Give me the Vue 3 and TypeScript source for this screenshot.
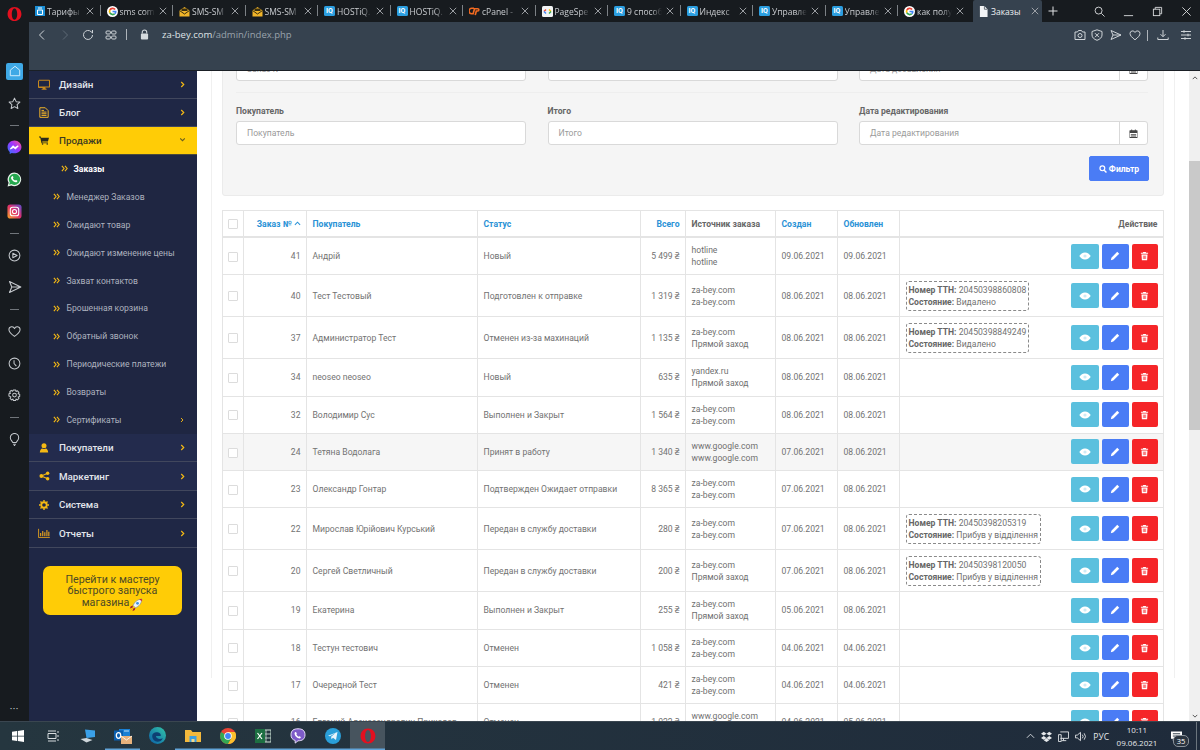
<script setup lang="ts">
interface Tab {
  icon: string;
  title: string;
}

interface MenuItem {
  name: string;
  icon: string;
  light?: boolean;
  open?: boolean;
}

interface Order {
  id: number;
  buyer: string;
  status: string;
  total: string;
  source: string[];
  created: string;
  updated: string;
  ttn?: string;
  state?: string;
  hover?: boolean;
}

const tabs: Tab[] = [
  { icon: 'a', title: 'Тарифы' },
  { icon: 'g', title: 'sms com' },
  { icon: 'sms', title: 'SMS-SM' },
  { icon: 'sms', title: 'SMS-SM' },
  { icon: 'iq', title: 'HOSTiQ.' },
  { icon: 'iq', title: 'HOSTiQ.' },
  { icon: 'cp', title: 'cPanel -' },
  { icon: 'ps', title: 'PageSpe' },
  { icon: 'iq', title: '9 способ' },
  { icon: 'iq', title: 'Индекс' },
  { icon: 'iq', title: 'Управле' },
  { icon: 'iq', title: 'Управле' },
  { icon: 'g', title: 'как полу' }
]

// rail = opera sidebar, null means a separator
const rail: (string | null)[] = [
  'home', 'star', null, 'messenger', 'whatsapp', 'instagram', null,
  'player', 'send', null, 'heart', 'clock', 'gear', null, 'bulb'
]

const topMenu: MenuItem[] = [
  { name: 'Дизайн', icon: 'desktop' },
  { name: 'Блог', icon: 'file' },
  { name: 'Продажи', icon: 'cart', open: true }
]

const subMenu = [
  'Менеджер Заказов',
  'Ожидают товар',
  'Ожидают изменение цены',
  'Захват контактов',
  'Брошенная корзина',
  'Обратный звонок',
  'Периодические платежи',
  'Возвраты',
  'Сертификаты'
]

const bottomMenu: MenuItem[] = [
  { name: 'Покупатели', icon: 'user', light: true },
  { name: 'Маркетинг', icon: 'share', light: true },
  { name: 'Система', icon: 'cog' },
  { name: 'Отчеты', icon: 'chart' }
]

const za = 'za-bey.com'
const direct = 'Прямой заход'
const gg = 'www.google.com'

const orders: Order[] = [
  { id: 41, buyer: 'Андрій', status: 'Новый', total: '5 499', source: ['hotline', 'hotline'], created: '09.06.2021', updated: '09.06.2021' },
  { id: 40, buyer: 'Тест Тестовый', status: 'Подготовлен к отправке', total: '1 319', source: [za, za], created: '08.06.2021', updated: '08.06.2021', ttn: '20450398860808', state: 'Видалено' },
  { id: 37, buyer: 'Администратор Тест', status: 'Отменен из-за махинаций', total: '1 135', source: [za, direct], created: '08.06.2021', updated: '08.06.2021', ttn: '20450398849249', state: 'Видалено' },
  { id: 34, buyer: 'neoseo neoseo', status: 'Новый', total: '635', source: ['yandex.ru', direct], created: '08.06.2021', updated: '08.06.2021' },
  { id: 32, buyer: 'Володимир Сус', status: 'Выполнен и Закрыт', total: '1 564', source: [za, za], created: '08.06.2021', updated: '08.06.2021' },
  { id: 24, buyer: 'Тетяна Водолага', status: 'Принят в работу', total: '1 340', source: [gg, gg], created: '07.06.2021', updated: '08.06.2021', hover: true },
  { id: 23, buyer: 'Олександр Гонтар', status: 'Подтвержден Ожидает отправки', total: '8 365', source: [za, za], created: '07.06.2021', updated: '08.06.2021' },
  { id: 22, buyer: 'Мирослав Юрійович Курський', status: 'Передан в службу доставки', total: '280', source: [za, za], created: '07.06.2021', updated: '08.06.2021', ttn: '20450398205319', state: 'Прибув у відділення' },
  { id: 20, buyer: 'Сергей Светличный', status: 'Передан в службу доставки', total: '200', source: [za, direct], created: '07.06.2021', updated: '08.06.2021', ttn: '20450398120050', state: 'Прибув у відділення' },
  { id: 19, buyer: 'Екатерина', status: 'Выполнен и Закрыт', total: '255', source: [za, direct], created: '05.06.2021', updated: '08.06.2021' },
  { id: 18, buyer: 'Тестун тестович', status: 'Отменен', total: '1 058', source: [za, za], created: '04.06.2021', updated: '04.06.2021' },
  { id: 17, buyer: 'Очередной Тест', status: 'Отменен', total: '421', source: [za, za], created: '04.06.2021', updated: '04.06.2021' },
  { id: 16, buyer: 'Евгений Алексеендрович Приходов', status: 'Отменен', total: '1 022', source: [gg, gg], created: '04.06.2021', updated: '05.06.2021' }
]

const filterRows = [
  [
    { label: 'Заказ №', placeholder: 'Заказ №' },
    { label: 'Статус', placeholder: '' },
    { label: 'Дата добавления', placeholder: 'Дата добавления', date: true }
  ],
  [
    { label: 'Покупатель', placeholder: 'Покупатель' },
    { label: 'Итого', placeholder: 'Итого' },
    { label: 'Дата редактирования', placeholder: 'Дата редактирования', date: true }
  ]
]

// underlines under running apps in the taskbar
const taskApps = ['win', 'task', 'laptop', 'outlook', 'edge', 'folder', 'chrome', 'excel', 'viber', 'telegram', 'opera']
const running = ['outlook', 'folder', 'chrome', 'excel', 'viber', 'telegram', 'opera']
</script>

<template>
  <div class="screen">
    <div class="browser">
      <aside class="rail">
        <svg class="opera-logo" viewBox="0 0 16 16" width="15" height="16">
          <path fill="#e3101f" fill-rule="evenodd" d="M8 .5C3.6.5.6 3.9.6 8s3 7.5 7.4 7.5 7.4-3.4 7.4-7.5S12.4.5 8 .5zM8 2c1.8 0 2.9 2.8 2.9 6S9.8 14 8 14 5.1 11.2 5.1 8 6.200 2 8 2z" />
        </svg>
        <template v-for="(item, i) in rail" :key="i">
          <div v-if="item === null" class="rail-sep"><span></span></div>
          <div v-else class="rail-slot">
            <div v-if="item === 'home'" class="home-box">
              <svg viewBox="0 0 14 14" width="12" height="12"><path d="M7 1.500 12.500 6v6.500h-11V6z" fill="none" stroke="#d6f0ff" stroke-width="1.100" /></svg>
            </div>
            <svg v-else-if="item === 'star'" viewBox="0 0 14 14" width="13" height="13"><path d="M7 1.200l1.800 3.800 4 .5-3 2.800.8 4.100L7 10.400l-3.600 2 .8-4.100-3-2.800 4-.5z" class="ln" /></svg>
            <svg v-else-if="item === 'messenger'" viewBox="0 0 16 16" width="15" height="15">
              <defs><linearGradient id="msg" x1="0" y1="1" x2="1" y2="0"><stop offset="0" stop-color="#2a7bff" /><stop offset=".55" stop-color="#a033ff" /><stop offset="1" stop-color="#ff5c87" /></linearGradient></defs>
              <path fill="url(#msg)" d="M8 .5C3.800.5.600 3.500.600 7.500c0 2.100.9 3.900 2.300 5.200V15l2.200-1.200c.9.300 1.900.4 2.900.4 4.200 0 7.400-3 7.400-6.700S12.200.500 8 .500z" />
              <path fill="none" stroke="#fff" stroke-width="1.200" d="M3.500 9.700 6.500 6.500l2 1.700 3.500-2-3 3.200-2-1.700z" />
            </svg>
            <svg v-else-if="item === 'whatsapp'" viewBox="0 0 16 16" width="15" height="15">
              <path fill="#e9f5ec" d="M8 .5A7.300 7.300 0 0 0 1.700 11.500L.6 15.500l4.100-1.100A7.300 7.300 0 1 0 8 .5z" />
              <path fill="#25a84e" d="M8 1.800a6 6 0 0 0-5 9.300l-.7 2.500 2.600-.7A6 6 0 1 0 8 1.800z" />
              <path fill="#fff" d="M5.600 4.400c.6-.3.9.5 1.200 1.300.2.500-.5.900-.5 1.200.5 1 1.200 1.700 2.300 2.200.4 0 .7-.8 1.100-.6l1.300.7c.3.500-.4 1.700-1.700 1.700-2.300-.1-5-2.700-5-4.700 0-.8.500-1.600 1.300-1.800z" />
            </svg>
            <svg v-else-if="item === 'instagram'" viewBox="0 0 16 16" width="15" height="15">
              <defs><linearGradient id="ig" x1="0" y1="1" x2="1" y2="0"><stop offset="0" stop-color="#f9a825" /><stop offset=".5" stop-color="#e1306c" /><stop offset="1" stop-color="#5b4fd0" /></linearGradient></defs>
              <rect x=".5" y=".5" width="15" height="15" rx="3" fill="url(#ig)" />
              <rect x="3.500" y="3.500" width="9" height="9" rx="2.500" fill="none" stroke="#fff" stroke-width="1.100" />
              <circle cx="8" cy="8" r="2.200" fill="none" stroke="#fff" stroke-width="1.100" />
            </svg>
            <svg v-else-if="item === 'player'" viewBox="0 0 14 14" width="13" height="13"><circle cx="7" cy="7" r="5.800" class="ln" /><path d="M5.200 4.600 9.800 7l-4.600 2.400z" class="ln" /></svg>
            <svg v-else-if="item === 'send'" viewBox="0 0 14 14" width="14" height="14"><path d="M1.500 1.500 12.800 7 1.500 12.500 3.800 7zM3.800 7h9" class="ln" /></svg>
            <svg v-else-if="item === 'heart'" viewBox="0 0 14 14" width="13" height="13"><path d="M7 12.300C3 9.300 1 7.300 1 5a3.100 3.100 0 0 1 6-1.100A3.100 3.100 0 0 1 13 5c0 2.300-2 4.300-6 7.300z" class="ln" /></svg>
            <svg v-else-if="item === 'clock'" viewBox="0 0 14 14" width="13" height="13"><circle cx="7" cy="7" r="5.800" class="ln" /><path d="M6.500 3.500V7l2.500 2.800" class="ln" /></svg>
            <svg v-else-if="item === 'gear'" viewBox="0 0 14 14" width="13" height="13"><path d="M5.800 1h2.400l.4 1.700 1.500-.8 1.700 1.700-.9 1.500 1.700.5v2.400l-1.700.5.900 1.500-1.700 1.700-1.500-.9-.4 1.700H5.800l-.4-1.700-1.500.9-1.700-1.700.9-1.500L1 7.600V5.200l1.700-.5-.9-1.500 1.700-1.700 1.500.9z" class="ln" /><circle cx="7" cy="6.500" r="2" class="ln" /></svg>
            <svg v-else-if="item === 'bulb'" viewBox="0 0 14 14" width="13" height="13"><path d="M5 10.200C4.700 8.600 2.500 7.800 2.500 5a4.500 4.500 0 0 1 9 0c0 2.800-2.200 3.600-2.500 5.200zM5.500 12h3M6.300 13.500h1.400" class="ln" /></svg>
          </div>
        </template>
        <div class="rail-dots">•••</div>
      </aside>

      <div class="window">
        <div class="tabstrip">
          <div v-for="(tab, i) in tabs" :key="i" class="tab">
            <span class="fav">
              <svg v-if="tab.icon === 'a'" viewBox="0 0 10 10" width="10" height="10"><rect width="10" height="10" fill="#1b8fd6" /><path d="M2.500 4h5v4.500h-5zM3 2h4" fill="none" stroke="#fff" stroke-width="1" /></svg>
              <svg v-else-if="tab.icon === 'g'" viewBox="0 0 12 12" width="11" height="11"><circle cx="6" cy="6" r="6" fill="#fff" /><path d="M9.600 3.400A4.400 4.400 0 0 0 2.300 4l1.600 1a2.600 2.600 0 0 1 4.300-.6z" fill="#ea4335" /><path d="M2.300 4a4.400 4.400 0 0 0 0 4l1.600-1.200a2.500 2.500 0 0 1 0-1.800z" fill="#fbbc05" /><path d="M2.300 8a4.400 4.400 0 0 0 6.900 1L7.800 7.900a2.600 2.600 0 0 1-3.900-1.100z" fill="#34a853" /><path d="M10.400 5.200H6v1.600h2.500a2 2 0 0 1-.7 1.100L9.200 9a4.400 4.400 0 0 0 1.200-3.800z" fill="#4285f4" /></svg>
              <svg v-else-if="tab.icon === 'sms'" viewBox="0 0 11 11" width="11" height="11"><path d="M.5 4.500 5.500 1l5 3.500V10.500H.5z" fill="#f0b429" /><path d="M.5 4.500l5 3.500 5-3.500" fill="none" stroke="#3a2f10" stroke-width="1" /><rect x="2.500" y="2.500" width="6" height="2.500" fill="#3a2f10" /></svg>
              <span v-else-if="tab.icon === 'iq'" class="iq">IQ</span>
              <svg v-else-if="tab.icon === 'cp'" viewBox="0 0 12 10" width="12" height="10"><path d="M5.500 2H3a2.500 2.500 0 0 0 0 6h1.500L6 2.500h3.500a1.200 1.200 0 0 1 0 2.500H8l-1.200 4.500" fill="none" stroke="#f26a21" stroke-width="1.800" /></svg>
              <svg v-else-if="tab.icon === 'ps'" viewBox="0 0 11 11" width="11" height="11"><rect width="11" height="11" rx="1.500" fill="#f1f3f4" /><path d="M2 5.500 4 3.500" stroke="#ea4335" stroke-width="1.400" /><path d="M2 5.500 4 7.500" stroke="#4285f4" stroke-width="1.400" /><path d="M7 3.500 9 5.500" stroke="#fbbc05" stroke-width="1.400" /><path d="M9 5.500 7 7.500" stroke="#34a853" stroke-width="1.400" /></svg>
            </span>
            <span class="tab-title">{{ tab.title }}</span>
            <svg class="tab-x" viewBox="0 0 8 8" width="8" height="8"><path d="M.8.800l6.400 6.400M7.200.800.800 7.200" /></svg>
            <span v-if="i !== tabs.length - 1" class="tab-sep"></span>
          </div>
          <div class="tab active">
            <span class="fav">
              <svg viewBox="0 0 10 12" width="9" height="11"><path d="M1 0h5l3.500 3.500V12H1z" fill="#f2f4f6" /><path d="M6 0v3.500h3.500" fill="none" stroke="#36424f" stroke-width=".8" /></svg>
            </span>
            <span class="tab-title">Заказы</span>
            <svg class="tab-x" viewBox="0 0 8 8" width="8" height="8"><path d="M.8.800l6.400 6.400M7.200.800.800 7.200" /></svg>
          </div>
          <svg class="plus" viewBox="0 0 10 10" width="10" height="10"><path d="M5 .5v9M.5 5h9" /></svg>
          <div class="win-ctrl">
            <svg viewBox="0 0 12 12" width="11" height="11"><circle cx="5" cy="5" r="3.800" /><path d="M8 8l3.500 3.500" /></svg>
            <svg viewBox="0 0 12 12" width="11" height="11"><path d="M1 10.500h10" /></svg>
            <svg viewBox="0 0 12 12" width="11" height="11"><rect x="1.500" y="3.500" width="7" height="7" /><path d="M3.500 3.500v-2h7v7h-2" /></svg>
            <svg viewBox="0 0 12 12" width="11" height="11"><path d="M1.500 1.500l9 9M10.500 1.500l-9 9" /></svg>
          </div>
        </div>

        <div class="toolbar">
          <svg class="tb first" viewBox="0 0 12 12" width="12" height="12"><path d="M8 1.500 3.500 6 8 10.500" /></svg>
          <svg class="tb dim" viewBox="0 0 12 12" width="12" height="12"><path d="M4 1.500 8.500 6 4 10.500" /></svg>
          <svg class="tb" viewBox="0 0 12 12" width="12" height="12"><path d="M10.500 6a4.500 4.500 0 1 1-1.300-3.200L10.500 4V1" /></svg>
          <svg class="tb" viewBox="0 0 12 12" width="12" height="12"><rect x="1" y="2" width="4.400" height="3" rx="1" /><rect x="6.600" y="2" width="4.400" height="3" rx="1" /><rect x="1" y="7" width="4.400" height="3" rx="1" /><rect x="6.600" y="7" width="4.400" height="3" rx="1" /></svg>
          <span class="tb-sep"></span>
          <svg class="lock" viewBox="0 0 10 12" width="9" height="11"><path d="M2.500 5V3.500a2.500 2.500 0 0 1 5 0V5" fill="none" stroke="#d5dade" stroke-width="1.200" /><rect x="1" y="5" width="8" height="6.500" rx="1" fill="#d5dade" /></svg>
          <span class="url"><b>za-bey.com</b>/admin/index.php</span>
          <div class="tb-right">
            <svg class="tb" viewBox="0 0 12 12" width="12" height="12"><path d="M1 3h2.500l1-1.500h3L8.500 3H11v7.500H1z" /><circle cx="6" cy="6.500" r="2" /></svg>
            <svg class="tb" viewBox="0 0 12 12" width="12" height="12"><path d="M6 .8 11 2.500V6c0 2.500-2 4.300-5 5.300C3 10.300 1 8.500 1 6V2.500zM4 4.200 8 8.200M8 4.200 4 8.200" /></svg>
            <svg class="tb" viewBox="0 0 12 12" width="12" height="12"><path d="M1 1.500 11 6 1 10.500 3 6zM3 6h8" /></svg>
            <svg class="tb" viewBox="0 0 12 12" width="12" height="12"><path d="M6 10.800C2.800 8.300 1 6.500 1 4.500a2.600 2.600 0 0 1 5-1 2.600 2.600 0 0 1 5 1c0 2-1.800 3.800-5 6.300z" /></svg>
            <span class="tb-sep"></span>
            <svg class="tb" viewBox="0 0 12 12" width="12" height="12"><path d="M6 1v6.500M3.500 5.200 6 7.700l2.500-2.500M.8 8.500v2h10.400v-2" /></svg>
            <svg class="tb" viewBox="0 0 12 12" width="12" height="12"><path d="M1 2.500h10M1 6h10M1 9.500h10M4 1.200v2.600M8 4.700v2.600M5 8.200v2.600" /></svg>
          </div>
        </div>

        <div class="page">
          <nav class="menu">
            <a v-for="m in topMenu" :key="m.name" class="menu-item" :class="{ open: m.open }">
              <span class="menu-icon">
                <svg v-if="m.icon === 'desktop'" viewBox="0 0 14 12" width="12" height="11"><path fill="#c8891e" d="M1 .5h12a1 1 0 0 1 1 1v7a1 1 0 0 1-1 1H8.500l.5 1.500h1V12H4v-.5h1l.5-1.500H1a1 1 0 0 1-1-1v-7a1 1 0 0 1 1-1zm.2 1.200v6.600h11.600V1.700z" /></svg>
                <svg v-else-if="m.icon === 'file'" viewBox="0 0 12 13" width="10" height="11"><path fill="none" stroke="#f0b429" stroke-width="1.200" d="M1 .8h6.500L11 4.300v8H1zM3 6h6M3 8h6M3 10h6M3 4h3" /></svg>
                <svg v-else viewBox="0 0 14 12" width="10" height="9"><path fill="#2a2a1c" d="M0 .5h2.500l.5 1.500h11l-1.500 5.500H4.500l.3 1.200H12.500V10H3.500L1.700 1.700H0z" /><circle cx="5" cy="11" r="1.100" fill="#2a2a1c" /><circle cx="11.500" cy="11" r="1.100" fill="#2a2a1c" /></svg>
              </span>
              <span class="menu-name">{{ m.name }}</span>
              <svg class="chev" viewBox="0 0 6 8" width="5" height="7"><path :d="m.open ? 'M.2 1.500 3 4.300 5.800 1.500' : 'M1.500 1 4.500 4 1.500 7'" /></svg>
            </a>
            <div class="sub">
              <a class="sub-item current">
                <svg class="dbl" viewBox="0 0 8 8" width="7" height="7"><path d="M1 1 3.500 4 1 7M4.500 1 7 4 4.500 7" /></svg>
                Заказы
              </a>
              <a v-for="s in subMenu" :key="s" class="sub-item">
                <svg class="dbl" viewBox="0 0 8 8" width="7" height="7"><path d="M1 1 3.500 4 1 7M4.500 1 7 4 4.500 7" /></svg>
                {{ s }}
                <svg v-if="s === 'Сертификаты'" class="chev small" viewBox="0 0 6 8" width="4" height="6"><path d="M1.500 1 4.500 4 1.500 7" /></svg>
              </a>
            </div>
            <a v-for="m in bottomMenu" :key="m.name" class="menu-item" :class="{ light: m.light }">
              <span class="menu-icon">
                <svg v-if="m.icon === 'user'" viewBox="0 0 12 12" width="10" height="10"><circle cx="6" cy="3.200" r="3" fill="#f5b914" /><path fill="#f5b914" d="M1 11.500c0-3 1.500-4.800 3-5 1 .8 3 .8 4 0 1.500.2 3 2 3 5z" /></svg>
                <svg v-else-if="m.icon === 'share'" viewBox="0 0 14 12" width="11" height="10"><g fill="#f5b914"><circle cx="3" cy="6" r="2.400" /><circle cx="11" cy="2.500" r="2.200" /><circle cx="11" cy="9.500" r="2.200" /></g><path d="M3 6 11 2.500M3 6l8 3.500" stroke="#f5b914" stroke-width="1.300" /></svg>
                <svg v-else-if="m.icon === 'cog'" viewBox="0 0 12 12" width="10" height="10"><circle cx="6" cy="6" r="3.300" fill="none" stroke="#f5b914" stroke-width="2.200" /><path stroke="#f5b914" stroke-width="1.700" d="M6 0v2M6 10v2M0 6h2M10 6h2M1.800 1.800l1.400 1.400M8.800 8.800l1.400 1.400M1.800 10.200l1.400-1.400M8.800 3.200l1.400-1.400" /></svg>
                <svg v-else viewBox="0 0 14 12" width="12" height="10"><path fill="none" stroke="#f0a81c" stroke-width="1" d="M.5 1v10.500H14" /><path stroke="#f0a81c" stroke-width="1.300" d="M3 10V6M5.500 10V3.500M8 10V5M10.500 10V2.500M12.800 10V4.500" /></svg>
              </span>
              <span class="menu-name">{{ m.name }}</span>
              <svg class="chev" viewBox="0 0 6 8" width="5" height="7"><path d="M1.500 1 4.500 4 1.500 7" /></svg>
            </a>
            <a class="wizard">
              Перейти к мастеру быстрого запуска магазина<svg class="rocket" viewBox="0 0 12 12" width="14" height="14"><path d="M3.500 6.500C4.500 3.500 7.500 1 11 .8c0 3.500-2.500 6.500-5.500 7.500z" fill="#eef3f8" stroke="#6f86a0" stroke-width=".5" /><path d="M8.800.9c.8 0 1.700 0 2.200 0 0 .6 0 1.500-.1 2.200z" fill="#d8232a" /><circle cx="7.300" cy="4.600" r="1.200" fill="#3d8fe0" /><path d="M3.500 6.500 1.500 7l-.8 2 2.300-.6zM5.500 8.300 5 10.300l-2 1 .6-2.300z" fill="#a8242c" /><path d="M3 8.800 1 11l2.200-1.800z" fill="#d97a10" /></svg>
            </a>
          </nav>

          <main class="content">
            <div class="inner">
              <section class="filter">
                <div v-for="(row, r) in filterRows" :key="r" class="filter-row">
                  <div v-for="f in row" :key="f.label" class="field">
                    <label>{{ f.label }}</label>
                    <div class="control">
                      <span class="input">{{ f.placeholder }}</span>
                      <span v-if="f.date" class="addon">
                        <svg viewBox="0 0 10 10" width="9" height="9"><path fill="#444" d="M1 1.500h1.500V.5h1v1h3V.5h1v1H9a.5.500 0 0 1 .5.500v7.500a.5.500 0 0 1-.5.500H1a.5.500 0 0 1-.5-.500V2a.5.500 0 0 1 .5-.500zm0 3v4.500h8V4.500z" /><path fill="#444" d="M2 5.500h6v1H2zM2 7.300h6v1H2z" /></svg>
                      </span>
                    </div>
                  </div>
                </div>
                <div class="filter-foot">
                  <button class="filter-btn">
                    <svg viewBox="0 0 10 10" width="8" height="8"><circle cx="4.200" cy="4.200" r="3" fill="none" stroke="#fff" stroke-width="1.500" /><path d="M6.500 6.500 9.300 9.300" stroke="#fff" stroke-width="1.700" /></svg>
                    Фильтр
                  </button>
                </div>
              </section>

              <table class="orders">
                <colgroup>
                  <col style="width: 21px" />
                  <col style="width: 63px" />
                  <col style="width: 171px" />
                  <col style="width: 163px" />
                  <col style="width: 45px" />
                  <col style="width: 90px" />
                  <col style="width: 62px" />
                  <col style="width: 62px" />
                  <col />
                </colgroup>
                <thead>
                  <tr>
                    <th class="center"><span class="check"></span></th>
                    <th class="right link">Заказ № <svg class="sort" viewBox="0 0 8 5" width="7" height="5"><path d="M1 4 4 1l3 3" /></svg></th>
                    <th class="link">Покупатель</th>
                    <th class="link">Статус</th>
                    <th class="right link">Всего</th>
                    <th>Источник заказа</th>
                    <th class="link">Создан</th>
                    <th class="link">Обновлен</th>
                    <th class="right">Действие</th>
                  </tr>
                </thead>
                <tbody>
                  <tr v-for="o in orders" :key="o.id" :class="{ tall: o.ttn, hover: o.hover }">
                    <td class="center"><span class="check"></span></td>
                    <td class="right">{{ o.id }}</td>
                    <td>{{ o.buyer }}</td>
                    <td>{{ o.status }}</td>
                    <td class="right">{{ o.total }} ₴</td>
                    <td class="source">{{ o.source[0] }}<br />{{ o.source[1] }}</td>
                    <td>{{ o.created }}</td>
                    <td>{{ o.updated }}</td>
                    <td>
                      <div class="action-cell">
                        <div v-if="o.ttn" class="ttn">
                          <b>Номер ТТН:</b> {{ o.ttn }}<br />
                          <b>Состояние:</b> {{ o.state }}
                        </div>
                        <div class="actions">
                          <button class="act view">
                            <svg viewBox="0 0 12 12" width="12" height="12"><path fill="#fff" d="M6 2.500C3.500 2.500 1.500 4.200.3 6c1.200 1.800 3.200 3.500 5.700 3.500S10.500 7.800 11.700 6C10.500 4.200 8.500 2.500 6 2.500z" /><circle cx="6" cy="6" r="1.600" fill="#cdeaf4" /></svg>
                          </button>
                          <button class="act edit">
                            <svg viewBox="0 0 12 12" width="10" height="10"><path fill="#fff" d="M8.700 1 11 3.300 4 10.300l-3 .7.700-3z" /></svg>
                          </button>
                          <button class="act del">
                            <svg viewBox="0 0 12 12" width="9" height="10"><path fill="#fff" d="M4.300.8h3.400l.5 1h2.600v1.300H1.200V1.800h2.600zM2 4h8l-.5 7.500h-7z" /><path stroke="#f52528" stroke-width=".8" d="M4.500 5.500v4.500M6 5.500v4.500M7.500 5.500v4.500" /></svg>
                          </button>
                        </div>
                      </div>
                    </td>
                  </tr>
                </tbody>
              </table>
            </div>
          </main>

          <div class="scrollbar">
            <svg class="sb-up" viewBox="0 0 8 5" width="6" height="4"><path d="M1 4 4 1l3 3" /></svg>
            <div class="sb-thumb"></div>
            <svg class="sb-down" viewBox="0 0 8 5" width="6" height="4"><path d="M1 1l3 3 3-3" /></svg>
          </div>
        </div>
      </div>
    </div>

    <footer class="taskbar">
      <div v-for="app in taskApps" :key="app" class="task" :class="{ running: running.includes(app), focus: app === 'opera' }">
        <svg v-if="app === 'win'" viewBox="0 0 12 12" width="12" height="12"><path fill="#fff" d="M0 1.700 5 1v4.700H0zM5.800.9 12 0v5.700H5.800zM0 6.400h5V11l-5-.7zM5.800 6.400H12V12l-6.200-.9z" /></svg>
        <svg v-else-if="app === 'task'" viewBox="0 0 12 12" width="12" height="12"><path fill="none" stroke="#d7dcdf" d="M1 3.500h8v5H1zM1 1h8M1 11h8M11 1v2M11 5v2M11 9v2" /></svg>
        <svg v-else-if="app === 'laptop'" viewBox="0 0 16 14" width="16" height="14"><path fill="#3aa0e8" d="M5 .5 15 1.500V8L6.500 9z" /><path fill="#cfd6db" d="M.5 10 6.500 9l6 2-6 2.500z" /></svg>
        <svg v-else-if="app === 'outlook'" viewBox="0 0 18 16" width="18" height="16"><rect x="5" y="1" width="11" height="9" fill="#1a7fd4" /><path d="M10 3.500h5v-1h-5z" fill="#bfe0f7" /><rect x="0" y="2.500" width="9" height="10" fill="#0b5fb0" /><ellipse cx="4.500" cy="7.500" rx="2.200" ry="2.800" fill="none" stroke="#fff" stroke-width="1.300" /><rect x="7" y="8" width="11" height="8" fill="#e8b27c" /><path d="M7 8l5.500 4L18 8" fill="none" stroke="#fff" stroke-width=".8" /></svg>
        <svg v-else-if="app === 'edge'" viewBox="0 0 16 16" width="17" height="17"><defs><linearGradient id="edge" x1="0" y1="1" x2="1" y2="0"><stop offset="0" stop-color="#0b5ea8" /><stop offset="1" stop-color="#33c6a8" /></linearGradient></defs><circle cx="8" cy="8" r="8" fill="url(#edge)" /><path d="M3 8.500C3 5.500 6 4.500 8 5c2.500.5 3.500 2 3 3.500H6.500c0 2.500 3.500 3.500 6.500 2-1 3-4.500 4-7 3-2-1-3-3-3-5z" fill="#0d3f73" /></svg>
        <svg v-else-if="app === 'folder'" viewBox="0 0 16 14" width="16" height="14"><path fill="#f4b93c" d="M0 1h6l1.500 2H16v10H0z" /><rect x="4.500" y="7" width="7" height="6" fill="#3f9fe0" /><rect x="6.500" y="10" width="3" height="3" fill="#f4d98a" /></svg>
        <svg v-else-if="app === 'chrome'" viewBox="0 0 16 16" width="16" height="16"><circle cx="8" cy="8" r="8" fill="#ea4335" /><path d="M8 8 1.100 4A8 8 0 0 0 8 16l3.500-6z" fill="#34a853" /><path d="M8 4h7a8 8 0 0 1-7 12l3.500-6z" fill="#fbc02d" /><circle cx="8" cy="8" r="3.800" fill="#fff" /><circle cx="8" cy="8" r="2.900" fill="#4285f4" /></svg>
        <svg v-else-if="app === 'excel'" viewBox="0 0 16 14" width="16" height="14"><rect x="6" y="1" width="10" height="12" fill="none" stroke="#cfe6d8" stroke-width="1" /><path d="M11 1v12M6 5h10M6 9h10" stroke="#cfe6d8" stroke-width=".8" /><rect x="0" y="0" width="10" height="14" fill="#1d6f42" /><path d="M2.500 4 7 10M7 4l-4.500 6" stroke="#fff" stroke-width="1.200" /></svg>
        <svg v-else-if="app === 'viber'" viewBox="0 0 16 16" width="16" height="16"><path fill="#7d5bc8" stroke="#e4dcf7" stroke-width="1" d="M8 .8c4 0 7 1.400 7 6s-3 6-7 6l-2.800 2.300v-2.600C2.300 11.600 1 9.800 1 6.800 1 2.200 4 .8 8 .8z" /><path fill="#fff" d="M5.500 4c.7-.2 1 .7 1.300 1.400.1.500-.6.800-.4 1.200.5 1 1.200 1.700 2.100 2.100.4 0 .7-.7 1.100-.5l1.200.8c.3.500-.4 1.300-1.200 1.400-2.300-.1-4.900-2.600-5-4.700 0-.8.300-1.500.900-1.700z" /></svg>
        <svg v-else-if="app === 'telegram'" viewBox="0 0 16 16" width="16" height="16"><circle cx="8" cy="8" r="8" fill="#2a9fd9" /><path fill="#e8f4fb" d="M3 7.800 12.500 4l-1.500 8-3-2.200-1.500 1.500-.4-2.500 4.400-3.800-5.600 3.300z" /></svg>
        <svg v-else viewBox="0 0 16 16" width="16" height="16"><path fill="#e3101f" fill-rule="evenodd" d="M8 .5C3.600.5.600 3.900.600 8s3 7.500 7.400 7.500 7.400-3.400 7.400-7.500S12.400.5 8 .5zM8 2c1.800 0 2.900 2.800 2.900 6S9.800 14 8 14 5.100 11.200 5.100 8 6.200 2 8 2z" /></svg>
      </div>
      <div class="tray">
        <svg viewBox="0 0 10 6" width="9" height="6"><path d="M1 5 5 1l4 4" fill="none" stroke="#dfe3e6" /></svg>
        <svg viewBox="0 0 12 12" width="11" height="11"><path fill="#e6e9ec" d="M3 .8 6 3 3 5 0 3zM9 .8 12 3 9 5 6 3zM3 5.500 6 7.500 3 9.500 0 7.500zM9 5.500l3 2-3 2-3-2zM3 10l3-2 3 2-3 2z" /></svg>
        <svg viewBox="0 0 12 12" width="11" height="11"><path fill="none" stroke="#dfe3e6" d="M2.500 1h9v7h-9M.5 4h3v7.500h-3zM6 8v2.500M4 10.500h5" /></svg>
        <svg viewBox="0 0 12 12" width="11" height="11"><path fill="none" stroke="#dfe3e6" d="M.5 4.500h2L6 1.500v9L2.500 7.500h-2zM8 4a3 3 0 0 1 0 4M10 2.500a5.500 5.500 0 0 1 0 7" /></svg>
        <span class="lang">РУС</span>
        <div class="clock"><span>10:11</span><span>09.06.2021</span></div>
        <div class="notify">
          <svg viewBox="0 0 12 12" width="11" height="11"><path fill="#fff" d="M0 .5h12v8H4l-2 2.500V8.500H0z" /><path stroke="#24323f" d="M2 3h8M2 5.500h8" /></svg>
          <span class="badge">35</span>
        </div>
        <span class="desk-line"></span>
      </div>
    </footer>
  </div>
</template>

<style>
html,
body {
  margin: 0;
  background: #fff;
}
</style>

<style scoped>
.screen {
  width: 1200px;
  height: 750px;
  display: flex;
  flex-direction: column;
  overflow: hidden;
  font-family: Roboto, "Noto Sans", "DejaVu Sans", sans-serif;
  font-size: 8.6px;
  color: #727272;
}

.browser {
  flex: 1;
  min-height: 0;
  display: flex;
}

/* opera left rail */
.rail {
  width: 29px;
  flex: none;
  background: #171b1f;
  display: flex;
  flex-direction: column;
  align-items: center;
}

.opera-logo {
  margin: 6px 0 33px;
}

.rail-slot {
  height: 32px;
  width: 100%;
  display: flex;
  align-items: center;
  justify-content: center;
  flex: none;
}

.rail-sep {
  height: 12px;
  display: flex;
  align-items: center;
  flex: none;
}

.rail-sep span {
  width: 9px;
  height: 1px;
  background: #70757a;
}

.ln {
  fill: none;
  stroke: #c4c8cc;
  stroke-width: 1.1;
  stroke-linejoin: round;
}

.home-box {
  width: 17px;
  height: 17px;
  border-radius: 2px;
  background: #3fa9e6;
  display: flex;
  align-items: center;
  justify-content: center;
}

.rail-dots {
  margin-top: auto;
  padding-bottom: 9px;
  color: #d0d3d6;
  font-size: 6px;
  letter-spacing: 1px;
}

.window {
  flex: 1;
  min-width: 0;
  display: flex;
  flex-direction: column;
}

/* tabs */
.tabstrip {
  height: 22px;
  flex: none;
  background: #171b1f;
  display: flex;
  align-items: stretch;
  color: #c9ccd0;
  font-family: "Open Sans", "Noto Sans", sans-serif;
  font-size: 8.5px;
}

.tab {
  width: 72.5px;
  flex: none;
  box-sizing: border-box;
  padding-left: 5px;
  display: flex;
  align-items: center;
  position: relative;
}

.tab.active {
  width: 69px;
  margin-left: 1.5px;
  background: #36424f;
  color: #eef0f2;
  border-radius: 2px 2px 0 0;
}

.fav {
  width: 11px;
  height: 11px;
  display: flex;
  align-items: center;
  justify-content: center;
  flex: none;
  margin-right: 2px;
}

.iq {
  width: 11px;
  height: 10px;
  background: #2b9ee0;
  border-radius: 1.5px;
  color: #fff;
  font: 700 7px/10px Roboto, sans-serif;
  text-align: center;
}

.tab-title {
  width: 35px;
  white-space: nowrap;
  -webkit-mask-image: linear-gradient(to right, #000 70%, transparent);
  mask-image: linear-gradient(to right, #000 70%, transparent);
}

.tab.active .tab-title {
  mask-image: none;
  -webkit-mask-image: none;
}

.tab-x {
  margin-left: 4px;
  fill: none;
  stroke: #a9adb1;
  stroke-width: 0.9;
}

.tab.active .tab-x {
  margin-left: 5px;
}

.tab-sep {
  position: absolute;
  right: 1px;
  top: 5px;
  height: 11px;
  width: 1px;
  background: #7c8186;
}

.plus {
  margin: 6px 0 0 6px;
  fill: none;
  stroke: #e1e3e5;
  stroke-width: 1;
}

.win-ctrl {
  margin-left: auto;
  display: flex;
  align-items: center;
  gap: 18px;
  padding-right: 8px;
}

.win-ctrl svg {
  fill: none;
  stroke: #d8dadc;
  stroke-width: 1;
}

/* address bar */
.toolbar {
  height: 49px;
  flex: none;
  box-sizing: border-box;
  background: #36424f;
  border-bottom: 1px solid #1a1f25;
  display: flex;
  align-items: flex-start;
  padding-top: 7px;
  color: #d5dade;
}

.tb {
  fill: none;
  stroke: #cfd4d8;
  stroke-width: 1;
  margin-right: 11px;
  flex: none;
}

.tb.first {
  margin-left: 7px;
}

.tb.dim {
  stroke: #5d6975;
}

.tb-sep {
  width: 1px;
  height: 11px;
  background: #aeb4ba;
  margin: 0 12px 0 -2px;
  flex: none;
}

.lock {
  margin: 0 13px 0 1px;
  flex: none;
}

.url {
  font-family: "Open Sans", "Noto Sans", sans-serif;
  font-size: 9.5px;
  line-height: 12px;
  color: #9aa3ac;
}

.url b {
  font-weight: 400;
  color: #dfe3e6;
}

.tb-right {
  margin-left: auto;
  display: flex;
  align-items: center;
  padding-right: 1px;
}

.tb-right .tb {
  margin-right: 7px;
}

.tb-right .tb:first-child {
  margin-right: 5px;
}

.tb-right .tb-sep {
  margin: 0 9px 0 -1px;
}

.tb-right .tb:nth-last-child(2) {
  margin-right: 11px;
}

/* page */
.page {
  flex: 1;
  min-height: 0;
  display: flex;
  overflow: hidden;
  background: #fff;
}

.menu {
  width: 168px;
  flex: none;
  background: #1f2745;
  display: flex;
  flex-direction: column;
  color: #e3e6ec;
}

.menu-item {
  height: 28px;
  flex: none;
  box-sizing: border-box;
  display: flex;
  align-items: center;
  border-bottom: 1px solid #41475d;
  font-size: 9.8px;
  font-weight: 500;
  padding: 0 12px 0 8px;
}

.sub ~ .menu-item {
  height: 28.5px;
}

.menu-item.open {
  background: #ffcc06;
  color: #3c3a22;
  border-bottom-color: #4b4a3a;
}

.menu-item.light {
  background: #232b4d;
}

.menu-icon {
  width: 14px;
  margin-right: 8px;
  display: flex;
  justify-content: center;
  flex: none;
}

.menu-name {
  flex: 1;
}

.chev {
  fill: none;
  stroke: #f5b914;
  stroke-width: 1.4;
  flex: none;
}

.menu-item.open .chev {
  stroke: #6b6020;
}

.sub {
  display: flex;
  flex-direction: column;
  background: #1f2642;
}

.sub-item {
  height: 27.9px;
  display: flex;
  align-items: center;
  padding-left: 24px;
  padding-right: 13px;
  color: #adb2bf;
  gap: 6.5px;
}

.sub-item.current {
  padding-left: 32px;
  color: #fff;
  font-weight: 700;
  gap: 5.5px;
}

.dbl {
  fill: none;
  stroke: #f5b914;
  stroke-width: 1.3;
  flex: none;
}

.chev.small {
  margin-left: auto;
}

.wizard {
  margin: 18px 15px 0 14px;
  height: 49px;
  flex: none;
  box-sizing: border-box;
  padding: 8px 12px 0;
  border-radius: 7px;
  background: #ffcc06;
  color: #4d4a25;
  font-size: 10.7px;
  line-height: 11.5px;
  text-align: center;
}

.rocket {
  vertical-align: -2px;
  margin: -4px 0;
}

.content {
  flex: 1;
  min-width: 0;
  overflow: hidden;
}

.inner {
  margin: 0 14px 0 14px;
  padding: 0 10px;
  box-sizing: border-box;
  height: 100%;
  border-left: 1px solid #f0f0f0;
  border-right: 1px solid #f0f0f0;
}

/* page is scrolled: top row of the filter sits above the fold */
.filter {
  margin-top: -43px;
  box-sizing: border-box;
  background: #f5f5f5;
  border: 1px solid #ebebeb;
  border-radius: 3px;
  padding: 0 15px 14px 13px;
}

.filter-row {
  display: grid;
  grid-template-columns: 290px 290px 289px;
  column-gap: 21.5px;
  padding: 11px 0;
  border-bottom: 1px solid #eeeeee;
}

.filter-row + .filter-row {
  border-bottom: 0;
  padding-bottom: 11px;
}

.field label {
  display: block;
  height: 13px;
  margin-bottom: 4px;
  font-weight: 700;
  line-height: 14px;
  color: #666;
}

.control {
  display: flex;
  height: 24px;
  box-sizing: border-box;
  background: #fff;
  border: 1px solid #d9d9d9;
  border-radius: 3px;
}

.input {
  flex: 1;
  padding-left: 10px;
  line-height: 22px;
  color: #9a9a9a;
}

.addon {
  width: 27px;
  display: flex;
  align-items: center;
  justify-content: center;
  border-left: 1px solid #d9d9d9;
}

.filter-foot {
  display: flex;
  justify-content: flex-end;
}

.filter-btn {
  width: 60px;
  height: 25px;
  margin-right: -1px;
  padding: 0;
  border: 1px solid #4a7cf5;
  border-radius: 2px;
  background: #4a7cf5;
  color: #fff;
  font: 700 8.6px Roboto, sans-serif;
  display: flex;
  align-items: center;
  justify-content: center;
  gap: 2px;
}

/* orders table */
.orders {
  width: 942px;
  margin-top: 14px;
  table-layout: fixed;
  border-collapse: collapse;
  background: #fff;
}

.orders th,
.orders td {
  border: 1px solid #e4e4e4;
  padding: 0 5.5px;
  text-align: left;
  white-space: nowrap;
  overflow: hidden;
}

.orders th {
  height: 25px;
  border-bottom-width: 2px;
  font-weight: 700;
  color: #666;
}

.orders th.link {
  color: #2a92d6;
}

.orders .right {
  text-align: right;
}

.orders .center {
  text-align: center;
  padding: 0;
}

.orders td {
  height: 36.25px;
  line-height: 12px;
}

.orders tr.tall td {
  height: 41px;
}

.orders tr.hover td {
  background: #f6f6f6;
}

.check {
  display: inline-block;
  width: 8px;
  height: 8px;
  vertical-align: middle;
  background: #fff;
  border: 1px solid #dcdcdc;
  border-radius: 1px;
}

.sort {
  fill: none;
  stroke: #2a92d6;
  stroke-width: 1.2;
  vertical-align: 1px;
}

.source {
  color: #707070;
}

.action-cell {
  display: flex;
  align-items: center;
}

.ttn {
  padding: 2px;
  border: 1px dashed #8a8a8a;
  border-radius: 3px;
}

.ttn b {
  color: #666;
}

.actions {
  margin-left: auto;
  display: flex;
  gap: 2.5px;
}

.act {
  height: 25px;
  padding: 0;
  border: 0;
  border-radius: 2px;
  display: flex;
  align-items: center;
  justify-content: center;
}

.act.view {
  width: 28.5px;
  background: #5bc0de;
}

.act.edit {
  width: 27.5px;
  background: #4a7cf5;
}

.act.del {
  width: 26px;
  background: #f52528;
}

.scrollbar {
  width: 11px;
  flex: none;
  background: #f0f0f0;
  position: relative;
  display: flex;
  flex-direction: column;
}

.sb-up {
  position: absolute;
  top: 5px;
  left: 2.5px;
  fill: none;
  stroke: #555;
  stroke-width: 1.3;
}

.sb-down {
  position: absolute;
  bottom: 3px;
  left: 2.5px;
  fill: none;
  stroke: #555;
  stroke-width: 1.3;
}

.sb-thumb {
  margin-top: 90px;
  height: 269px;
  background: #c9c9c9;
}

/* windows taskbar */
.taskbar {
  height: 29px;
  flex: none;
  display: flex;
  background: linear-gradient(to right, #25363f, #1f2b3b);
  border-top: 1px solid #3a4650;
  box-sizing: border-box;
}

.task {
  width: 35px;
  flex: none;
  display: flex;
  align-items: center;
  justify-content: center;
  box-sizing: border-box;
  padding-bottom: 1px;
}

.task.running {
  box-shadow: inset 0 -2px 0 -0.5px #62a4d8;
}

.task.focus {
  background: #47545e;
}

.tray {
  margin-left: auto;
  display: flex;
  align-items: center;
  gap: 6px;
  color: #e6e9ec;
  font-family: "Open Sans", "Noto Sans", sans-serif;
  font-size: 8.5px;
}

.lang {
  margin-left: 1.5px;
}

.clock {
  width: 56px;
  display: flex;
  flex-direction: column;
  align-items: center;
  font-size: 8px;
  line-height: 13px;
  margin-left: -6px;
}

.notify {
  position: relative;
  margin-left: -6px;
  width: 22px;
  height: 22px;
  display: flex;
  align-items: center;
  justify-content: center;
}

.badge {
  position: absolute;
  right: -2px;
  bottom: 0;
  width: 14px;
  height: 10px;
  line-height: 10px;
  text-align: center;
  border-radius: 5px;
  background: #2a3440;
  border: 1px solid #8a9199;
  color: #fff;
  font-size: 7.5px;
}

.desk-line {
  width: 1px;
  height: 100%;
  margin-left: 3px;
  margin-right: 3px;
  background: #6b757d;
}
</style>
